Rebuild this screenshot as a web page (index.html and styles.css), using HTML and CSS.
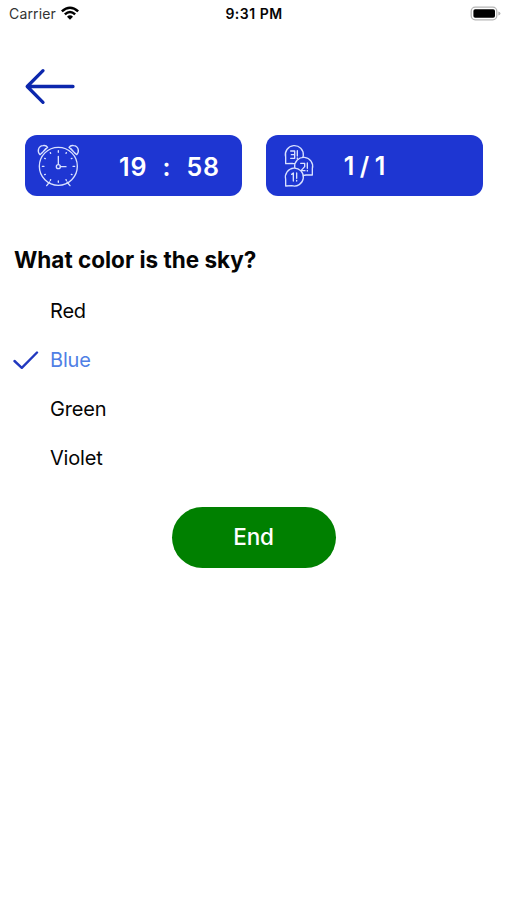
FILE: index.html
```html
<!DOCTYPE html>
<html lang="en">
<head>
<meta charset="utf-8">
<title>Quiz</title>
<link rel="stylesheet" href="styles.css">
</head>
<body>
<header class="status">
  <div class="carrier"><span class="carrier-name">Carrier</span>
    <svg class="wifi" viewBox="0 0 18 14"><path d="M0 4.5Q9-3.7 18 4.5L16.3 6.3Q9-.5 1.7 6.3Z"/><path d="M3 7.5Q9 2 15 7.5L13.3 9.3Q9 5.3 4.7 9.3Z"/><path d="M6 10.7Q9 8 12 10.7L9 13.7Z"/></svg>
  </div>
  <time class="time">9:31 PM</time>
  <svg class="battery" viewBox="0 0 31 16"><rect class="shell" x="1.2" y="1.2" width="25.6" height="12.6" rx="4"/><rect x="3.4" y="3.2" width="21.6" height="8.6" rx="1.8"/><path class="tip" d="M28.3 5.4q2.2.6 2.2 2.1t-2.2 2.1z"/></svg>
</header>
<main>
  <button class="back" aria-label="Back"><svg viewBox="0 0 52 38"><path d="M49 18.5H3.5M19 2.7L3.2 18.5L19 34.3"/></svg></button>
  <section class="stats">
    <div class="card">
      <svg class="clock" viewBox="0 0 168 168">
        <circle cx="85" cy="85" r="57"/>
        <circle cx="85" cy="86" r="6"/>
        <path d="M85 79V55M91 86H108"/>
        <path d="M85 38v5M85 129v4M37 85h5M129 85h5M61 44l1 2M44 61l2 1M108 46l1-2M124 62l2-1M44 110l2-1M61 127l1-2M109 127l-1-2M126 110l-2-1"/>
        <path d="M59 132L50 143M111 132L120 143"/>
        <path d="M30 50C21 42 24 24 39 23Q48 21 53 28ZM35 46L47 32M140 50C149 42 146 24 131 23Q122 21 117 28ZM135 46L123 32"/>
      </svg>
      <div class="timer"><span>19</span><span class="colon">:</span><span>58</span></div>
    </div>
    <div class="card">
      <svg class="bubbles" viewBox="0 0 138 168">
        <path d="M29 77V57A27 27 0 1 1 48 76Z"/>
        <path class="front" d="M109 111V92A27 27 0 1 0 90 111Z"/>
        <path class="front" d="M29 144V124A27 27 0 1 1 47 143Z"/>
        <path class="digits" d="M44 39H56V61H44M46 50H56M64 38V54M64 60V62M74 76H86V86L75 98H87M94 75V91M94 97V99M47 109L52 105V129M62 105V121M62 127V129"/>
      </svg>
      <div class="progress"><span>1</span><span>/</span><span>1</span></div>
    </div>
  </section>
  <h1>What color is the sky?</h1>
  <ul class="answers">
    <li><span>Red</span></li>
    <li class="selected"><svg class="check" viewBox="0 0 26 20"><path d="M1.5 11L8.8 17.8L24 2.5"/></svg><span>Blue</span></li>
    <li><span>Green</span></li>
    <li><span>Violet</span></li>
  </ul>
  <button class="end">End</button>
</main>
</body>
</html>
```
FILE: styles.css
```css
* { box-sizing: border-box; }
body { margin: 0; background: #fff; color: #050505; font-family: Inter, "Liberation Sans", sans-serif; }
button { border: 0; font-family: inherit; }
svg { display: block; flex: none; }
.status { height: 28px; padding: 0 6px 2px 9px; display: grid; grid-template-columns: 1fr auto 1fr; align-items: center; }
.carrier { display: flex; align-items: center; gap: 5px; font-size: 14px; color: #333; }
.carrier-name { letter-spacing: .15px; }
.wifi { width: 18px; height: 14px; fill: #000; }
.time { font-size: 14px; font-weight: 600; letter-spacing: .5px; margin-right: 2px; }
.battery { width: 31px; height: 16px; justify-self: end; margin-top: 1px; }
.battery .shell { fill: #fff; stroke: #b5b5b5; stroke-width: 1.3; }
.battery .tip { fill: #b5b5b5; }
main { display: flex; flex-direction: column; }
.back { margin: 40px 0 0 24px; padding: 0; width: 52px; height: 38px; background: none; }
.back svg { width: 52px; height: 38px; fill: none; stroke: #0c27ad; stroke-width: 3.3; stroke-linecap: round; stroke-linejoin: round; }
.stats { display: grid; grid-template-columns: 1fr 1fr; gap: 24px; margin: 29.4px 24.5px 0 25px; }
.card { height: 61px; border-radius: 12px; background: #1e36d2; display: flex; align-items: center; color: #fff; font-size: 25px; font-weight: 600; line-height: 30px; }
.clock, .bubbles { fill: none; stroke: #d9e1ff; stroke-width: 4; stroke-linecap: round; stroke-linejoin: round; }
.clock { width: 56px; height: 56px; margin-left: 5px; }
.bubbles { width: 46px; height: 56px; margin-left: 10px; }
.bubbles .front { fill: #1e36d2; }
.timer { display: flex; margin-left: 33px; padding-top: 2px; letter-spacing: .9px; }
.colon { width: 39px; text-align: center; }
.progress { display: flex; margin-left: 22px; padding-top: 1px; gap: 5.5px; }
h1 { margin: 48.6px 0 0 14px; font-size: 22.5px; font-weight: 700; line-height: 30px; letter-spacing: 0; }
.answers { list-style: none; margin: 11px 0 0; padding: 0 0 0 13px; }
.answers li { height: 49.2px; display: grid; grid-template-columns: 37px 1fr; align-items: center; font-size: 20px; letter-spacing: -.2px; }
.answers span { grid-column: 2; grid-row: 1; }
.check { width: 26px; height: 20px; grid-column: 1; grid-row: 1; fill: none; stroke: #2138bf; stroke-width: 2.4; stroke-linecap: round; stroke-linejoin: round; }
.selected { color: #5080e5; }
.end { align-self: center; margin-top: 24.4px; width: 164px; height: 61px; padding: 0 0 2px; border-radius: 31px; background: #008000; color: #fff; font-size: 22.5px; font-weight: 500; letter-spacing: -.2px; }
```
